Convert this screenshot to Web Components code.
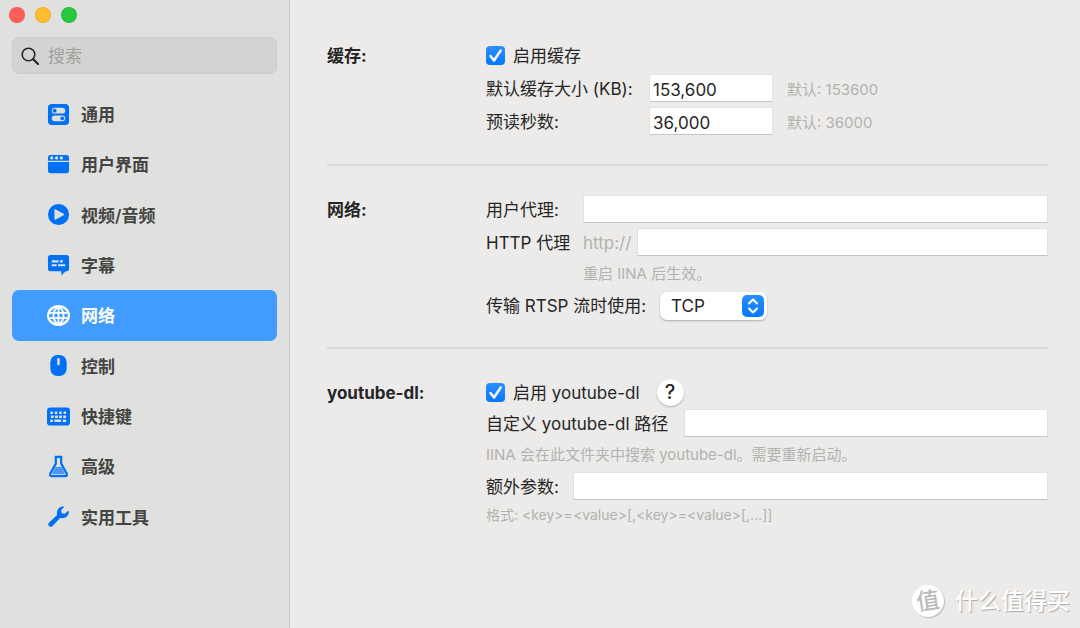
<!DOCTYPE html>
<html lang="zh-CN">
<head>
<meta charset="utf-8">
<meta name="viewport" content="width=device-width, initial-scale=1">
<title>IINA 设置</title>
<style>
  body {
    margin: 0;
    background: #ecebe9;
    color: #262626;
    font: 17px/28px Inter, "Noto Sans CJK SC", sans-serif;
  }
</style>
</head>
<body>
<prefs-window>
  <side-bar slot="sidebar">
    <nav-item><svg viewBox="0 0 24 24"><rect x="1" y="1" width="22" height="22" rx="4" fill="#0070f5"/><rect x="5" y="5" width="14" height="6" rx="3" fill="#e0e0de"/><circle cx="8" cy="8" r="2" fill="#0070f5"/><rect x="5" y="13" width="14" height="6" rx="3" fill="#e0e0de"/><circle cx="16" cy="16" r="2" fill="#0070f5"/></svg>通用</nav-item>
    <nav-item><svg viewBox="0 0 24 24"><path d="M1 8.200V5a3 3 0 0 1 3-3h16a3 3 0 0 1 3 3v3.200zM1 9.400h22V18a3 3 0 0 1-3 3H4a3 3 0 0 1-3-3z" fill="#0070f5"/><g fill="#e0e0de"><circle cx="5" cy="5.200" r="1.700"/><circle cx="10" cy="5.200" r="1.700"/><circle cx="15" cy="5.200" r="1.700"/></g></svg>用户界面</nav-item>
    <nav-item><svg viewBox="0 0 24 24"><circle cx="12" cy="12" r="11" fill="#0070f5"/><path d="M8.300 6.800v10.400l9.500-5.200z" fill="#e0e0de" stroke="#e0e0de" stroke-linejoin="round"/></svg>视频/音频</nav-item>
    <nav-item><svg viewBox="0 0 24 24"><path d="M4 1h16a3 3 0 0 1 3 3v11a3 3 0 0 1-3 3h-.500L15 22.500V18H4a3 3 0 0 1-3-3V4a3 3 0 0 1 3-3z" fill="#0070f5"/><path d="M5 7.700h7M13.500 7.700h3M5 11.700h5M11.500 11.700h7.500" stroke="#e0e0de" stroke-width="2.100"/></svg>字幕</nav-item>
    <nav-item current><svg viewBox="0 0 24 24"><ellipse cx="12" cy="12" rx="12" ry="11" fill="#fff"/><ellipse cx="12" cy="12" rx="9.800" ry="8.300" fill="#429cff"/><path d="M12 2v20M2 9.300h20M2 14.700h20M12 2.500C5 7 5 17 12 21.500M12 2.500c7 4.500 7 14.500 0 19" fill="none" stroke="#fff" stroke-width="1.900"/></svg>网络</nav-item>
    <nav-item><svg viewBox="0 0 24 24"><rect x="3.500" y="1" width="17" height="22" rx="7.500" fill="#0070f5"/><path d="M12 5.500v5" stroke="#e0e0de" stroke-width="2.600" stroke-linecap="round"/></svg>控制</nav-item>
    <nav-item><svg viewBox="0 0 24 24"><rect x="0" y="2.500" width="24" height="19" rx="3.500" fill="#0070f5"/><path d="M3.500 8h17" stroke="#e0e0de" stroke-width="2.600" stroke-dasharray="2.600 2"/><path d="M4 12.200h16.500" stroke="#e0e0de" stroke-width="2.600" stroke-dasharray="3 1.300"/><path d="M3.500 16.400h2.600M7.700 16.400h7M16.500 16.400h3.500" stroke="#e0e0de" stroke-width="2.600"/></svg>快捷键</nav-item>
    <nav-item><svg viewBox="0 0 24 24"><path d="M8 2h8M9.200 2v7L3.500 19.300Q2.500 22 5 22h14q2.500 0 1.500-2.700L14.800 9V2" fill="none" stroke="#0070f5" stroke-width="2.300"/><path d="M8.500 12.500h7l3 6.500q.4 1-.8 1H6.300q-1.200 0-.8-1z" fill="#4b98ee"/></svg>高级</nav-item>
    <nav-item><svg viewBox="0 0 24 24"><path d="M2 18.500 10.500 10.500C9.500 5.500 12.500 1 18 1.700L14.800 5.500l.5 3 3.200.6L22.700 5.800C23.500 11 19 14.600 13.800 13.600L5.500 22.200Q3.500 23.500 2 22 .500 20.500 2 18.500z" fill="#0070f5"/></svg>实用工具</nav-item>
  </side-bar>

  <pref-section heading="缓存:" class="cache">
    <check-field label="启用缓存"></check-field>
    <text-field label="默认缓存大小 (KB):" value="153,600" note="默认: 153600"></text-field>
    <text-field label="预读秒数:" value="36,000" note="默认: 36000"></text-field>
  </pref-section>
  <pref-section heading="网络:" class="network">
    <text-field class="proxy" label="用户代理:"></text-field>
    <text-field class="proxy" label="HTTP 代理" prefix="http://"></text-field>
    <hint-text class="inset">重启 IINA 后生效。</hint-text>
    <select-field label="传输 RTSP 流时使用:"></select-field>
  </pref-section>
  <pref-section heading="youtube-dl:" class="ytdl">
    <check-field label="启用 youtube-dl" help></check-field>
    <text-field class="path" label="自定义 youtube-dl 路径"></text-field>
    <hint-text>IINA 会在此文件夹中搜索 youtube-dl。需要重新启动。</hint-text>
    <text-field class="args" label="额外参数:"></text-field>
    <hint-text class="syntax">格式: &lt;key&gt;=&lt;value&gt;[,&lt;key&gt;=&lt;value&gt;[,...]]</hint-text>
  </pref-section>
  <site-mark slot="mark"></site-mark>
</prefs-window>

<script>
const define = (name, render) => customElements.define(name, class extends HTMLElement {
  connectedCallback() {
    if (this.shadowRoot) return;
    this.attachShadow({ mode: 'open' }).innerHTML = render(this);
  }
});
const attr = (el, name) => el.getAttribute(name) || '';

define('prefs-window', () => `
  <style>
    :host { display: grid; grid-template-columns: 290px 1fr; min-height: 100vh; position: relative; box-sizing: border-box; }
    main { padding: 41px 32px 0 37px; }
    ::slotted(pref-section) { border-bottom: 2px solid #dadad8; padding: 29px 0; }
    ::slotted(.cache) { padding-top: 0; }
    ::slotted(.network) { padding-bottom: 27px; }
    ::slotted(.ytdl) { --row-gap: 3px; --hint-line: 29px; border-bottom: 0; }
    ::slotted(site-mark) { position: absolute; right: 10px; bottom: 11px; }
  </style>
  <slot name="sidebar"></slot>
  <main><slot></slot></main>
  <slot name="mark"></slot>`);

define('side-bar', () => `
  <style>
    :host { display: block; box-sizing: border-box; background: #e0e0de; border-right: 1px solid #c9c9c9; padding: 7px 12px 0; }
    .lights { display: flex; gap: 10px; margin-left: -3px; }
    .lights button { width: 16px; height: 16px; padding: 0; border: 1px solid #0001; border-radius: 50%; background: var(--c); }
    .search { display: flex; align-items: center; gap: 9px; box-sizing: border-box; height: 37px; margin: 14px 0 15px; padding: 0 8px; border: 1px solid #cbcbc9; border-radius: 7px; background: #d3d3d1; }
    .search svg { width: 18px; height: 18px; flex: none; }
    input { flex: 1; min-width: 0; border: 0; outline: 0; padding: 0; background: none; font: inherit; }
    input::placeholder { color: #a0a09e; opacity: 1; }
    nav { display: grid; grid-auto-rows: 1fr; min-height: 453px; }
  </style>
  <div class="lights">
    <button aria-label="关闭" style="--c:#ff5f57"></button><button aria-label="最小化" style="--c:#febc2e"></button><button aria-label="缩放" style="--c:#28c840"></button>
  </div>
  <label class="search">
    <svg viewBox="0 0 18 18" fill="none" stroke="#262626"><circle cx="7.500" cy="7.500" r="6.300" stroke-width="1.600"/><path d="m12 12 5 5" stroke-width="2.200" stroke-linecap="round"/></svg>
    <input type="search" placeholder="搜索" aria-label="搜索">
  </label>
  <nav><slot></slot></nav>`);

define('nav-item', () => `
  <style>
    :host { display: block; color: #444442; font-weight: 600; }
    a { display: flex; align-items: center; gap: 11px; box-sizing: border-box; height: 100%; padding-left: 35px; border-radius: 7px; color: inherit; text-decoration: none; }
    :host([current]) { color: #fff; }
    :host([current]) a { background: #429cff; }
    span { display: contents; }
    ::slotted(svg) { width: 23px; height: 23px; flex: none; margin-bottom: 2px; }
    a { padding-top: 2px; }
  </style>
  <a href="#"><slot></slot></a>`);

define('pref-section', el => `
  <style>
    :host { display: grid; grid-template-columns: 159px minmax(0, 1fr); }
    h2 { margin: 0; font-size: 17px; line-height: 30px; font-weight: 700; }
    div { display: flex; flex-direction: column; gap: var(--row-gap, 5px); }
  </style>
  <h2>${attr(el, 'heading')}</h2>
  <div><slot></slot></div>`);

define('check-field', el => `
  <style>
    :host { display: flex; align-items: center; gap: 17px; height: 28px; }
    label { display: flex; align-items: center; gap: 8px; }
    .text { padding-top: 2px; }
    .box { display: grid; place-items: center; width: 19px; height: 19px; }
    .box > * { grid-area: 1 / 1; }
    input { appearance: none; width: 19px; height: 19px; margin: 0; border-radius: 4px; background: #fff; }
    input:checked { background: linear-gradient(#2b8fff, #0578fb); }
    svg { width: 19px; height: 19px; pointer-events: none; }
    input:not(:checked) + svg { visibility: hidden; }
    button { width: 27px; height: 27px; padding: 0; border: 0; border-radius: 50%; background: #fff; color: #262626; font: 500 20px/27px Inter, sans-serif; box-shadow: 0 1px 2px #0004; }
  </style>
  <label><span class="box"><input type="checkbox" checked><svg viewBox="0 0 19 19"><path d="m4.500 10 3.500 4.500 6.700-10" fill="none" stroke="#fff" stroke-width="2.400" stroke-linecap="round" stroke-linejoin="round"/></svg></span><span class="text">${attr(el, 'label')}</span></label>
  ${el.hasAttribute('help') ? '<button type="button">?</button>' : ''}`);

define('text-field', el => `
  <style>
    :host { display: flex; align-items: center; height: 28px; }
    label { flex: none; white-space: nowrap; width: 163px; padding-top: 2px; }
    :host(.proxy) label { width: 97px; }
    :host(.path) label { width: 198px; }
    :host(.args) label { width: 87px; }
    input { flex: 1; min-width: 0; height: 28px; box-sizing: border-box; padding: 3px 3px 0; border: 1px solid #e2e2e0; border-bottom-color: #c4c4c2; border-radius: 0; outline: 0; background: #fff; color: #262626; font: inherit; }
    :host([note]) input { flex: none; width: 124px; }
    .note { margin-left: 14px; color: #b2b2b0; font-size: 15px; padding-top: 4px; }
    .prefix { flex: none; width: 54px; color: #b2b2b0; padding-top: 2px; }
  </style>
  <label for="f">${attr(el, 'label')}</label>
  ${attr(el, 'prefix') ? `<span class="prefix">${attr(el, 'prefix')}</span>` : ''}
  <input id="f" type="text" value="${attr(el, 'value')}">
  ${attr(el, 'note') ? `<span class="note">${attr(el, 'note')}</span>` : ''}`);

define('hint-text', () => `
  <style>
    :host { display: block; color: #b2b2b0; font-size: 15px; line-height: var(--hint-line, 26px); }
    :host(.inset) { padding-left: 97px; }
    :host(.syntax) { font-size: 14px; line-height: 24px; }
  </style>
  <slot></slot>`);

define('select-field', el => `
  <style>
    :host { display: flex; align-items: center; height: 28px; }
    label { width: 174px; flex: none; white-space: nowrap; }
    .menu { display: grid; align-items: center; width: 107px; }
    .menu > * { grid-area: 1 / 1; }
    select { appearance: none; width: 107px; height: 28px; padding: 0 11px; border: 0; border-radius: 7px; background: #fff; color: #262626; font: inherit; line-height: 28px; box-shadow: 0 1px 2px #0004; }
    svg { justify-self: end; margin-right: 3px; width: 22px; height: 22px; pointer-events: none; }
  </style>
  <label for="s">${attr(el, 'label')}</label>
  <span class="menu">
    <select id="s"><option>TCP</option><option>UDP</option><option>HTTP</option></select>
    <svg viewBox="0 0 22 22"><defs><linearGradient id="g" x2="0" y2="1"><stop stop-color="#2b8fff"/><stop offset="1" stop-color="#0578fb"/></linearGradient></defs><rect width="22" height="22" rx="5" fill="url(#g)"/><path d="m7 8.500 4-4 4 4M7 13.500l4 4 4-4" fill="none" stroke="#fff" stroke-width="2.100" stroke-linecap="round" stroke-linejoin="round"/></svg>
  </span>`);

define('site-mark', () => `
  <style>
    :host { display: flex; align-items: center; gap: 11px; color: #fff; font-size: 23px; line-height: 32px; font-weight: 500; text-shadow: 1px 1px 1px #aaa; }
    .seal { width: 32px; height: 32px; border-radius: 50%; background: #fff; color: #bbb; text-align: center; text-shadow: none; box-shadow: 1px 1px 1px #bbb; }
    .seal b { display: block; font-weight: 500; transform: rotate(-8deg); }
  </style>
  <span class="seal"><b>值</b></span><span>什么值得买</span>`);
</script>
</body>
</html>
